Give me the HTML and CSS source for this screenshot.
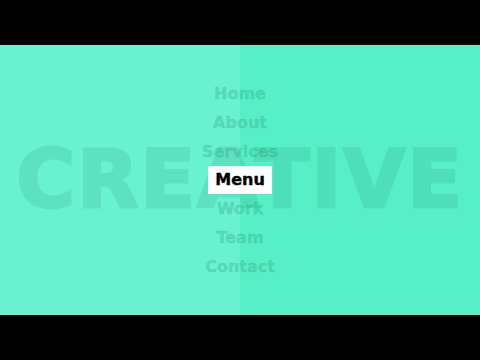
FILE: index.html
```html
<!DOCTYPE html>
<html>
<head>
<meta charset="utf-8">
<link rel="stylesheet" href="styles.css">
</head>
<body>
<div class="screen">
  <div class="stage">
    <div class="half left"></div>
    <div class="half right"></div>
    <div class="bigword">CREATIVE</div>
    <nav class="menu">
      <a class="item">Home</a>
      <a class="item">About</a>
      <a class="item">Services</a>
      <a class="item toggle">Menu</a>
      <a class="item">Work</a>
      <a class="item">Team</a>
      <a class="item">Contact</a>
    </nav>
  </div>
</div>
</body>
</html>
```
FILE: styles.css
```css
html, body {
  margin: 0;
  padding: 0;
  background: #000;
  width: 480px;
  height: 360px;
  overflow: hidden;
}
.screen {
  padding-top: 45px;
}
.stage {
  position: relative;
  height: 270px;
  display: flex;
  overflow: hidden;
  font-family: "DejaVu Sans", "Noto Sans", sans-serif;
}
.half {
  flex: 1;
}
.left { background: #68f2cf; }
.right { background: #57f0c6; }
.bigword {
  position: absolute;
  left: 0;
  right: 0;
  top: 50%;
  transform: translateY(-50%);
  text-align: center;
  font-size: 80px;
  font-weight: 900;
  letter-spacing: 2px;
  color: #146e5a;
  -webkit-text-stroke: 3px #146e5a;
  opacity: 0.12;
  line-height: 1;
}
.menu {
  position: absolute;
  left: 0;
  right: 0;
  top: 0;
  bottom: 0;
  display: flex;
  flex-direction: column;
  align-items: center;
  justify-content: center;
}
.item {
  font-size: 16px;
  font-weight: 700;
  line-height: 29px;
  height: 29px;
  color: rgba(20, 110, 90, 0.2);
  -webkit-text-stroke: 0.4px rgba(20, 110, 90, 0.2);
}
.toggle {
  background: #fff;
  color: #000;
  -webkit-text-stroke: 0.4px #000;
  padding: 0 7px;
  height: 28px;
  line-height: 28px;
}
```
